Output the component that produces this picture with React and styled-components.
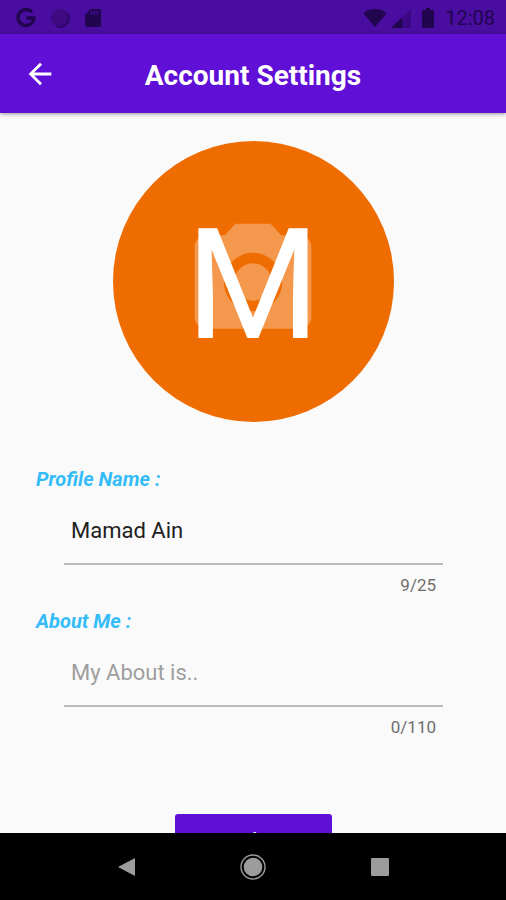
import { useState } from "react";
import styled, { createGlobalStyle } from "styled-components";
import { MdArrowBack, MdCameraAlt } from "react-icons/md";

const App = () => {
     const [name, setName] = useState("Mamad Ain");
     const [about, setAbout] = useState("");

     return (
          <Screen>
               <GlobalStyles />
               <StatusBar>
                    <StatusGroup $gap="14px">
                         <GoogleIcon />
                         <SyncIcon />
                         <SdCardIcon />
                    </StatusGroup>
                    <StatusGroup $gap="4px">
                         <WifiIcon />
                         <SignalIcon />
                         <BatteryIcon />
                         <Clock>12:08</Clock>
                    </StatusGroup>
               </StatusBar>
               <AppBar>
                    <BackButton aria-label="Back">
                         <MdArrowBack />
                    </BackButton>
                    <Title>Account Settings</Title>
               </AppBar>
               <Content>
                    <Avatar aria-label="Change photo">
                         <AvatarLetter>M</AvatarLetter>
                         <MdCameraAlt />
                    </Avatar>
                    <Form>
                         <Label htmlFor="profile-name">Profile Name :</Label>
                         <Field>
                              <Input id="profile-name" value={name} maxLength={25} placeholder="My Name is.." onChange={(e) => setName(e.target.value)} />
                              <Counter>{name.length}/25</Counter>
                         </Field>
                         <Label htmlFor="about-me">About Me :</Label>
                         <Field>
                              <Input id="about-me" value={about} maxLength={110} placeholder="My About is.." onChange={(e) => setAbout(e.target.value)} />
                              <Counter>{about.length}/110</Counter>
                         </Field>
                    </Form>
                    <UpdateButton>Update</UpdateButton>
               </Content>
               <NavBar>
                    <NavButton aria-label="Back">
                         <svg width="28" height="28" viewBox="0 0 28 28">
                              <path d="M23 5v18L6 14z" fill="#9c9c9c" />
                         </svg>
                    </NavButton>
                    <NavButton aria-label="Home">
                         <svg width="28" height="28" viewBox="0 0 28 28">
                              <circle cx="14" cy="14" r="12" fill="none" stroke="#9c9c9c" strokeWidth="1.4" />
                              <circle cx="14" cy="14" r="9.3" fill="#9c9c9c" />
                         </svg>
                    </NavButton>
                    <NavButton aria-label="Recent apps">
                         <svg width="28" height="28" viewBox="0 0 28 28">
                              <rect x="5" y="5" width="18" height="18" rx="1" fill="#9c9c9c" />
                         </svg>
                    </NavButton>
               </NavBar>
          </Screen>
     );
};

export default App;

const GoogleIcon = () => (
     <svg width="20" height="20" viewBox="0 0 20 20">
          <path d="M16 4.2A8 8 0 1 0 18 10H10.5" fill="none" stroke="#22054f" strokeWidth="3.4" />
     </svg>
);

const SyncIcon = () => (
     <svg width="20" height="20" viewBox="0 0 20 20">
          <circle cx="10" cy="10" r="9" fill="#3d0a82" />
          <path d="M17 4.5A9 9 0 0 1 7 18.5" fill="none" stroke="#2b0665" strokeWidth="1.5" />
     </svg>
);

const SdCardIcon = () => (
     <svg width="18" height="20" viewBox="0 0 18 20">
          <path d="M6.5 1H15a2 2 0 0 1 2 2v14a2 2 0 0 1-2 2H3a2 2 0 0 1-2-2V7z" fill="#22054f" />
          <path d="M7.5 3v3.4M10.5 3v3.4M13.5 3v3.4" stroke="#4a0da0" strokeWidth="1.5" />
     </svg>
);

const WifiIcon = () => (
     <svg width="24" height="20" viewBox="0 0 24 20">
          <path d="M12 19L.5 5.5C3.5 2.2 7.5 1 12 1s8.5 1.2 11.5 4.5z" fill="#22054f" />
     </svg>
);

const SignalIcon = () => (
     <svg width="20" height="20" viewBox="0 0 20 20">
          <path d="M0 20L20 1v19z" fill="#3a0883" />
          <path d="M0 20L11 9.5V20z" fill="#22054f" />
     </svg>
);

const BatteryIcon = () => (
     <svg width="26" height="20" viewBox="0 0 26 20">
          <path d="M11 0h4v2h3a1 1 0 0 1 1 1v16a1 1 0 0 1-1 1H8a1 1 0 0 1-1-1V3a1 1 0 0 1 1-1h3z" fill="#22054f" />
     </svg>
);

const GlobalStyles = createGlobalStyle`
     * {
          box-sizing: border-box;
     }
     body {
          margin: 0;
          background: #fafafa;
          font-family: Roboto, "Liberation Sans", sans-serif;
     }
     button, input {
          font-family: inherit;
     }
     svg {
          display: block;
     }
`;

const Screen = styled.div`
     height: 100vh;
     display: flex;
     flex-direction: column;
`;

const StatusBar = styled.div`
     flex: none;
     height: 34px;
     padding: 1px 11px 0 16px;
     display: flex;
     align-items: center;
     justify-content: space-between;
     background: #490d9f;
`;

const StatusGroup = styled.div`
     display: flex;
     align-items: center;
     gap: ${(props) => props.$gap};
`;

const Clock = styled.span`
     font-size: 20px;
     line-height: 24px;
     color: #22054f;
`;

const AppBar = styled.header`
     flex: none;
     height: 79px;
     padding: 0 20px;
     display: grid;
     grid-template-columns: 40px 1fr 40px;
     align-items: center;
     background: #600fd6;
     box-shadow: 0 1px 4px rgba(0, 0, 0, 0.4);
     z-index: 1;
`;

const BackButton = styled.button`
     width: 40px;
     height: 40px;
     padding: 0;
     border: none;
     background: none;
     display: flex;
     align-items: center;
     justify-content: center;
     font-size: 34px;
     color: #fff;
     cursor: pointer;
`;

const Title = styled.h1`
     margin: 0;
     padding-top: 4px;
     font-size: 28px;
     line-height: 32px;
     font-weight: 700;
     text-align: center;
     color: #fff;
`;

const Content = styled.main`
     flex: 1;
     min-height: 0;
     overflow-y: auto;
     scrollbar-width: none;
     padding: 28px 36px;
     display: flex;
     flex-direction: column;
     align-items: center;
`;

const Avatar = styled.button`
     flex: none;
     width: 281px;
     height: 281px;
     padding: 0;
     border: none;
     border-radius: 50%;
     display: grid;
     place-items: center;
     background: #ef6c00;
     cursor: pointer;

     > * {
          grid-area: 1 / 1;
     }
     svg {
          width: 140px;
          height: 140px;
          color: rgba(255, 255, 255, 0.3);
     }
`;

const AvatarLetter = styled.span`
     padding-top: 8px;
     font-size: 154px;
     line-height: 180px;
     color: #fff;
`;

const Form = styled.form`
     width: 100%;
     margin-top: 44px;
`;

const Label = styled.label`
     display: block;
     font-size: 20px;
     line-height: 26px;
     font-weight: 700;
     font-style: italic;
     color: #33bcf8;
`;

const Field = styled.div`
     margin: 0 27px 0 28px;
     height: 116px;
`;

const Input = styled.input`
     display: block;
     width: 100%;
     height: 73px;
     padding: 6px 7px 0;
     border: none;
     border-bottom: 2px solid #bababa;
     border-radius: 0;
     outline: none;
     background: none;
     font-size: 22px;
     color: #212121;

     &::placeholder {
          color: #9e9e9e;
          opacity: 1;
     }
`;

const Counter = styled.div`
     padding: 9px 7px 0;
     font-size: 17px;
     line-height: 22px;
     text-align: right;
     color: #6e6e6e;
`;

const UpdateButton = styled.button`
     flex: none;
     width: 157px;
     height: 56px;
     margin-top: 64px;
     border: none;
     border-radius: 3px;
     background: #600fd6;
     font-size: 24px;
     line-height: 28px;
     color: #fff;
     cursor: pointer;
`;

const NavBar = styled.nav`
     flex: none;
     height: 67px;
     padding: 0 63px;
     display: grid;
     grid-template-columns: repeat(3, 1fr);
     background: #000;
`;

const NavButton = styled.button`
     padding: 0;
     border: none;
     background: none;
     display: flex;
     align-items: center;
     justify-content: center;
     cursor: pointer;
`;
